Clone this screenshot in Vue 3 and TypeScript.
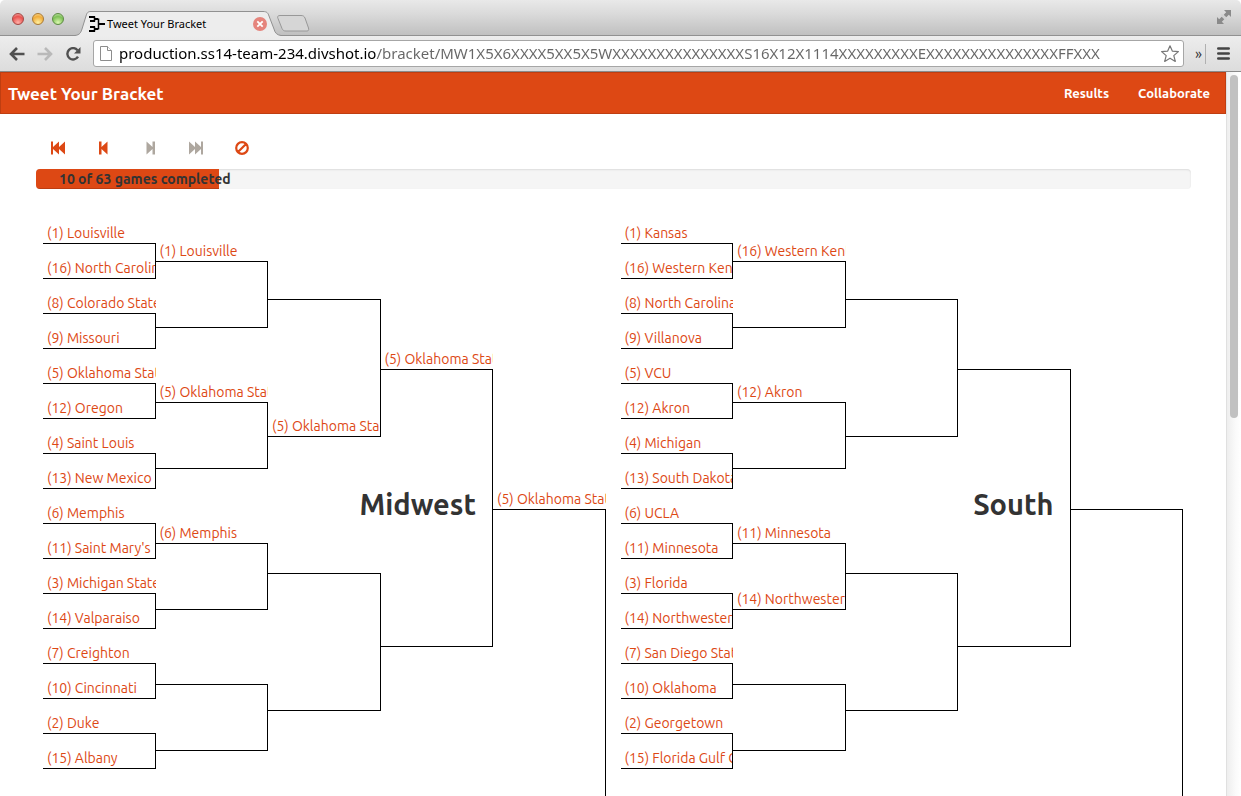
<script setup lang="ts">
interface Match {
  top?: string
  bottom?: string
}
interface Region {
  name: string
  rounds: Match[][]
}

const address =
  'production.ss14-team-234.divshot.io/bracket/MW1X5X6XXXX5XX5X5WXXXXXXXXXXXXXXXS16X12X1114XXXXXXXXXEXXXXXXXXXXXXXXXFFXXX'
const completed = 10
const total = 63

const regions: Region[] = [
  {
    name: 'Midwest',
    rounds: [
      [
        { top: '(1) Louisville', bottom: '(16) North Carolina A&T' },
        { top: '(8) Colorado State', bottom: '(9) Missouri' },
        { top: '(5) Oklahoma State', bottom: '(12) Oregon' },
        { top: '(4) Saint Louis', bottom: '(13) New Mexico State' },
        { top: '(6) Memphis', bottom: "(11) Saint Mary's" },
        { top: '(3) Michigan State', bottom: '(14) Valparaiso' },
        { top: '(7) Creighton', bottom: '(10) Cincinnati' },
        { top: '(2) Duke', bottom: '(15) Albany' },
      ],
      [{ top: '(1) Louisville' }, { top: '(5) Oklahoma State' }, { top: '(6) Memphis' }, {}],
      [{ bottom: '(5) Oklahoma State' }, {}],
      [{ top: '(5) Oklahoma State' }],
      [{ top: '(5) Oklahoma State' }],
    ],
  },
  {
    name: 'South',
    rounds: [
      [
        { top: '(1) Kansas', bottom: '(16) Western Kentucky' },
        { top: '(8) North Carolina', bottom: '(9) Villanova' },
        { top: '(5) VCU', bottom: '(12) Akron' },
        { top: '(4) Michigan', bottom: '(13) South Dakota State' },
        { top: '(6) UCLA', bottom: '(11) Minnesota' },
        { top: '(3) Florida', bottom: '(14) Northwestern State' },
        { top: '(7) San Diego State', bottom: '(10) Oklahoma' },
        { top: '(2) Georgetown', bottom: '(15) Florida Gulf Coast' },
      ],
      [
        { top: '(16) Western Kentucky' },
        { top: '(12) Akron' },
        { top: '(11) Minnesota', bottom: '(14) Northwestern State' },
        {},
      ],
      [{}, {}],
      [{}],
      [{}],
    ],
  },
]
</script>

<template>
  <div class="window">
    <header class="chrome">
      <div class="titlebar">
        <div class="lights">
          <button class="light red" aria-label="Close window"></button>
          <button class="light amber" aria-label="Minimize window"></button>
          <button class="light green" aria-label="Zoom window"></button>
        </div>
        <div class="tab">
          <svg class="tab-shape" viewBox="0 0 206 25" preserveAspectRatio="none" aria-hidden="true">
            <path d="M0 24.5C5 24 6 21 7 18L11 5C12 1.500 13 .5 16 .5H188C192 .5 193 2 194 5L199 18C200 22 202 24 206 24.500V25H0Z" fill="#ededed" />
            <path d="M0 24.500C5 24 6 21 7 18L11 5C12 1.500 13 .5 16 .5H188C192 .5 193 2 194 5L199 18C200 22 202 24 206 24.500" fill="none" stroke="#919191" />
          </svg>
          <svg class="favicon" viewBox="0 0 16 16" aria-hidden="true">
            <path d="M0 1H6M1 5H6M1 11H6M0 15H6M6 3H9M6 13H9M10 8H16" fill="none" stroke="#000" stroke-width="1.800" />
            <path d="M5.500 .5V5.500M5.500 10.500V15.500M9.500 2.500V13.500" fill="none" stroke="#000" stroke-width="1.500" />
          </svg>
          <span class="tab-title">Tweet Your Bracket</span>
          <button class="tab-close" aria-label="Close tab">
            <svg viewBox="0 0 14 14"><circle cx="7" cy="7" r="7" fill="#e5847c" /><path d="M4.300 4.300l5.400 5.400M9.700 4.300l-5.400 5.400" stroke="#fff" stroke-width="1.800" /></svg>
          </button>
        </div>
        <button class="new-tab" aria-label="New tab">
          <svg viewBox="0 0 34 17"><path d="M4 .5H25C27 .5 28 1 29 3L32.500 13C33 15 32.500 16 31 16H10C8 16 7 15.500 6 13.500L2 3.500C1 1.500 2 .5 4 .5Z" fill="#d6d6d6" stroke="#989898" /></svg>
        </button>
        <button class="expand" aria-label="Enter full screen">
          <svg viewBox="0 0 14 14" fill="#8a8a8a"><path d="M7 0H14V7L11.800 4.800L9.300 7.300L6.700 4.700L9.200 2.200ZM0 7L2.200 9.200L4.700 6.700L7.300 9.300L4.800 11.800L7 14H0Z" /><path d="M4.500 4.500L9.500 9.500" stroke="#d0d0d0" stroke-width="1.400" /></svg>
        </button>
      </div>
      <div class="toolbar">
        <button class="tool" aria-label="Back">
          <svg viewBox="0 0 16 14" fill="none" stroke="#505050" stroke-width="2.600"><path d="M15.500 7H2M8 1L2 7L8 13" /></svg>
        </button>
        <button class="tool" aria-label="Forward" disabled>
          <svg viewBox="0 0 16 14" fill="none" stroke="#b9b9b9" stroke-width="2.600"><path d="M.5 7H14M8 1L14 7L8 13" /></svg>
        </button>
        <button class="tool" aria-label="Reload">
          <svg viewBox="0 0 16 14"><path d="M12.500 3.200A5.700 5.700 0 1 0 13 9.700" fill="none" stroke="#505050" stroke-width="2.400" /><path d="M15.500 0V6.500H9Z" fill="#505050" /></svg>
        </button>
        <div class="omnibox">
          <svg class="page-icon" viewBox="0 0 12 15" fill="#fff" stroke="#8c8c8c"><path d="M.5 .5H7.500L11.500 4.500V14.500H.5Z" /><path d="M7.500 .5V4.500H11.500" /></svg>
          <input class="address" type="text" aria-label="Address" :value="address" spellcheck="false" />
          <button class="star" aria-label="Bookmark this page">
            <svg viewBox="0 0 18 17" fill="#fff" stroke="#777" stroke-width="1.200" stroke-linejoin="round"><path d="M9 .8L11.300 6.100L17.400 6.600L12.800 10.600L14.300 16.400L9 13.200L3.700 16.400L5.200 10.600L.6 6.600L6.700 6.100Z" /></svg>
          </button>
        </div>
        <button class="more" aria-label="More extensions">»</button>
        <button class="menu" aria-label="Menu">
          <svg viewBox="0 0 13 13" stroke="#444" stroke-width="2.600" stroke-linecap="round"><path d="M1.300 1.500H11.700M1.300 6.500H11.700M1.300 11.500H11.700" /></svg>
        </button>
      </div>
    </header>

    <div class="viewport">
      <main class="page">
        <nav class="navbar">
          <a class="brand" href="#">Tweet Your Bracket</a>
          <a class="link" href="#results">Results</a>
          <a class="link" href="#collaborate">Collaborate</a>
        </nav>
        <div class="content">
          <div class="controls">
            <button aria-label="First">
              <svg viewBox="0 0 14 13"><path d="M0 0H2V5.500L8 0V5.500L14 0V13L8 7.500V13L2 7.500V13H0Z" /></svg>
            </button>
            <button aria-label="Previous">
              <svg viewBox="0 0 14 13"><path d="M2 0H4.500V5.500L10.500 0V13L4.500 7.500V13H2Z" /></svg>
            </button>
            <button aria-label="Next" disabled>
              <svg viewBox="0 0 14 13"><path d="M12 0H9.500V5.500L3.500 0V13L9.500 7.500V13H12Z" /></svg>
            </button>
            <button aria-label="Last" disabled>
              <svg viewBox="0 0 14 13"><path d="M14 0H12V5.500L6 0V5.500L0 0V13L6 7.500V13L12 7.500V13H14Z" /></svg>
            </button>
            <button aria-label="Reset">
              <svg viewBox="0 0 14 14"><path d="M7 1.200A5.800 5.800 0 1 0 7 12.800A5.800 5.800 0 1 0 7 1.200M3 11L11 3" class="ring" /></svg>
            </button>
          </div>
          <div class="progress" role="progressbar" aria-valuemin="0" :aria-valuemax="total" :aria-valuenow="completed">
            <div class="bar" :style="{ width: (completed / total) * 100 + '%' }">
              <span class="bar-text">{{ completed }} of {{ total }} games completed</span>
            </div>
          </div>
          <div class="bracket">
            <section v-for="region in regions" :key="region.name" class="region">
              <div v-for="(round, r) in region.rounds" :key="r" class="round" :class="'round-' + (r + 1)">
                <div v-for="(match, m) in round" :key="m" class="match">
                  <div class="slot top"><a v-if="match.top" href="#pick">{{ match.top }}</a></div>
                  <div class="slot bottom"><a v-if="match.bottom" href="#pick">{{ match.bottom }}</a></div>
                </div>
              </div>
              <h2>{{ region.name }}</h2>
            </section>
          </div>
        </div>
      </main>
      <div class="scrollbar" aria-hidden="true"><div class="thumb"></div></div>
    </div>
  </div>
</template>

<style>
html,
body {
  margin: 0;
  background: #fff;
}
</style>

<style scoped>
* {
  box-sizing: border-box;
}
button {
  border: 0;
  padding: 0;
  margin: 0;
  background: none;
  font: inherit;
}
svg {
  display: block;
}
a {
  text-decoration: none;
}
.window {
  height: 100vh;
  display: flex;
  flex-direction: column;
  overflow: hidden;
  background: #fff;
  font-family: Ubuntu, "Noto Sans", sans-serif;
}
.chrome {
  flex: none;
}
.titlebar {
  height: 36px;
  display: flex;
  align-items: flex-end;
  padding-left: 12px;
  padding-right: 10px;
  border-radius: 5px 5px 0 0;
  background: linear-gradient(#e9e9e9, #dadada 40%, #c0c0c0);
  border-bottom: 1px solid #919191;
}
.lights {
  display: flex;
  gap: 8px;
  width: 63px;
  padding-bottom: 10px;
}
.light {
  width: 12px;
  height: 12px;
  border-radius: 50%;
  border: 1px solid;
}
.red {
  background: radial-gradient(circle at 50% 85%, #ffb0a8, #e8524f 60%, #f6b5b0);
  border-color: #a34743;
}
.amber {
  background: radial-gradient(circle at 50% 85%, #fff0a0, #f0ac3a 60%, #fbdf9c);
  border-color: #a97a35;
}
.green {
  background: radial-gradient(circle at 50% 85%, #dcf8b0, #7dc056 60%, #cbe8b4);
  border-color: #5d8b43;
}
.tab {
  position: relative;
  width: 206px;
  height: 25px;
  margin-bottom: -1px;
  display: flex;
  align-items: center;
  padding: 0 14px;
}
.tab-shape {
  position: absolute;
  inset: 0;
  width: 100%;
  height: 100%;
}
.favicon {
  position: relative;
  width: 16px;
  height: 16px;
}
.tab-title {
  position: relative;
  flex: 1;
  padding-left: 2px;
  font-family: "Lucida Grande", "Noto Sans", sans-serif;
  font-size: 11px;
  color: #000;
}
.tab-close {
  position: relative;
}
.tab-close svg {
  width: 14px;
  height: 14px;
}
.new-tab {
  margin-left: -5px;
  margin-bottom: 3px;
}
.new-tab svg {
  width: 34px;
  height: 17px;
}
.expand {
  margin-left: auto;
  margin-bottom: 11px;
}
.expand svg {
  width: 14px;
  height: 14px;
}
.toolbar {
  height: 36px;
  display: flex;
  align-items: center;
  padding: 0 11px 0 9px;
  background: linear-gradient(#ededed, #dcdcdc);
  border-bottom: 1px solid #8a8a8a;
}
.tool {
  margin-right: 12px;
}
.tool svg {
  width: 16px;
  height: 14px;
}
.omnibox {
  flex: 1;
  min-width: 0;
  height: 27px;
  display: flex;
  align-items: center;
  padding: 0 4px 0 6px;
  background: #fff;
  border: 1px solid #a6a6a6;
  border-radius: 3px;
}
.page-icon {
  flex: none;
  width: 12px;
  height: 15px;
}
.address {
  flex: 1;
  min-width: 0;
  height: 25px;
  margin-left: 7px;
  padding: 0 0 2px;
  border: 0;
  outline: 0;
  font-family: "Lucida Grande", "Noto Sans", sans-serif;
  font-size: 15px;
  color: transparent;
  background: linear-gradient(90deg, #000 258px, #666 258px);
  -webkit-background-clip: text;
  background-clip: text;
}
.star svg {
  width: 18px;
  height: 17px;
}
.more {
  width: 22px;
  height: 20px;
  padding-left: 8px;
  border-right: 1px solid #b0b0b0;
  font-size: 15px;
  line-height: 16px;
  color: #333;
}
.menu {
  margin-left: 11px;
}
.menu svg {
  width: 13px;
  height: 13px;
}
.viewport {
  flex: 1;
  min-height: 0;
  display: flex;
}
.page {
  flex: 1;
  min-width: 0;
  overflow: hidden;
}
.navbar {
  height: 42px;
  display: flex;
  align-items: center;
  gap: 29px;
  padding: 0 15px 0 7px;
  background: #dd4814;
  border: 1px solid #bf3e11;
}
.brand {
  flex: 1;
  font-size: 17px;
  font-weight: 700;
  color: #fff;
}
.link {
  font-size: 13px;
  font-weight: 700;
  color: #fff;
}
.content {
  padding: 26px 35px 0 36px;
}
.controls {
  display: flex;
  gap: 32px;
  padding-left: 15px;
  height: 29px;
  align-items: flex-start;
}
.controls button {
  height: 16px;
  display: flex;
  align-items: center;
}
.controls svg {
  width: 14px;
  height: 14px;
  fill: #dd4814;
}
.controls button:disabled svg {
  fill: #aea79f;
}
.controls .ring {
  fill: none;
  stroke: #dd4814;
  stroke-width: 2.200;
}
.progress {
  height: 20px;
  background: #f5f5f5;
  border-radius: 4px;
  overflow: hidden;
  box-shadow: inset 0 1px 2px rgba(0, 0, 0, 0.1);
}
.bar {
  height: 20px;
  padding-left: 23px;
  background: #dd4814;
  box-shadow: inset 0 -1px 0 rgba(0, 0, 0, 0.15);
}
.bar-text {
  font-size: 14px;
  font-weight: 700;
  line-height: 20px;
  white-space: nowrap;
  color: #333;
}
.bracket {
  display: grid;
  grid-template-columns: 1fr 1fr;
  padding-top: 35px;
}
.region {
  display: grid;
  grid-template-columns: repeat(5, minmax(0, 1fr));
  align-items: start;
  padding: 0 8px 0 7px;
}
.round {
  grid-row: 1;
  display: flex;
  flex-direction: column;
}
.slot {
  display: flex;
  align-items: flex-end;
  overflow: hidden;
  padding-left: 4px;
  font-size: 14px;
  line-height: 20px;
  white-space: nowrap;
  border-bottom: 1px solid #000;
}
.slot a {
  color: #dd4814;
}
.top {
  height: 20px;
}
.bottom {
  border-right: 1px solid #000;
}
.round-1 {
  grid-column: 1;
  gap: 15px;
}
.round-1 .bottom {
  height: 35px;
}
.round-2 {
  grid-column: 2;
  gap: 55px;
  padding-top: 18px;
}
.round-2 .bottom {
  height: 66px;
}
.round-3 {
  grid-column: 3;
  gap: 117px;
  padding-top: 56px;
}
.round-3 .bottom {
  height: 137px;
}
.round-4 {
  grid-column: 4;
  padding-top: 126px;
}
.round-4 .bottom {
  height: 277px;
}
.round-5 {
  grid-column: 5;
  padding-top: 266px;
}
.round-5 .bottom {
  height: 560px;
}
h2 {
  grid-row: 1;
  grid-column: 1 / 5;
  justify-self: end;
  margin: 260px 17px 0 0;
  font-size: 29px;
  font-weight: 700;
  line-height: 40px;
  color: #333;
}
.scrollbar {
  width: 15px;
  padding: 3px 3px 0;
  background: linear-gradient(90deg, #eee, #fafafa 60%, #fff);
  border-left: 1px solid #e0e0e0;
}
.thumb {
  width: 8px;
  height: 343px;
  border-radius: 4px;
  background: #c1c1c1;
}
</style>
